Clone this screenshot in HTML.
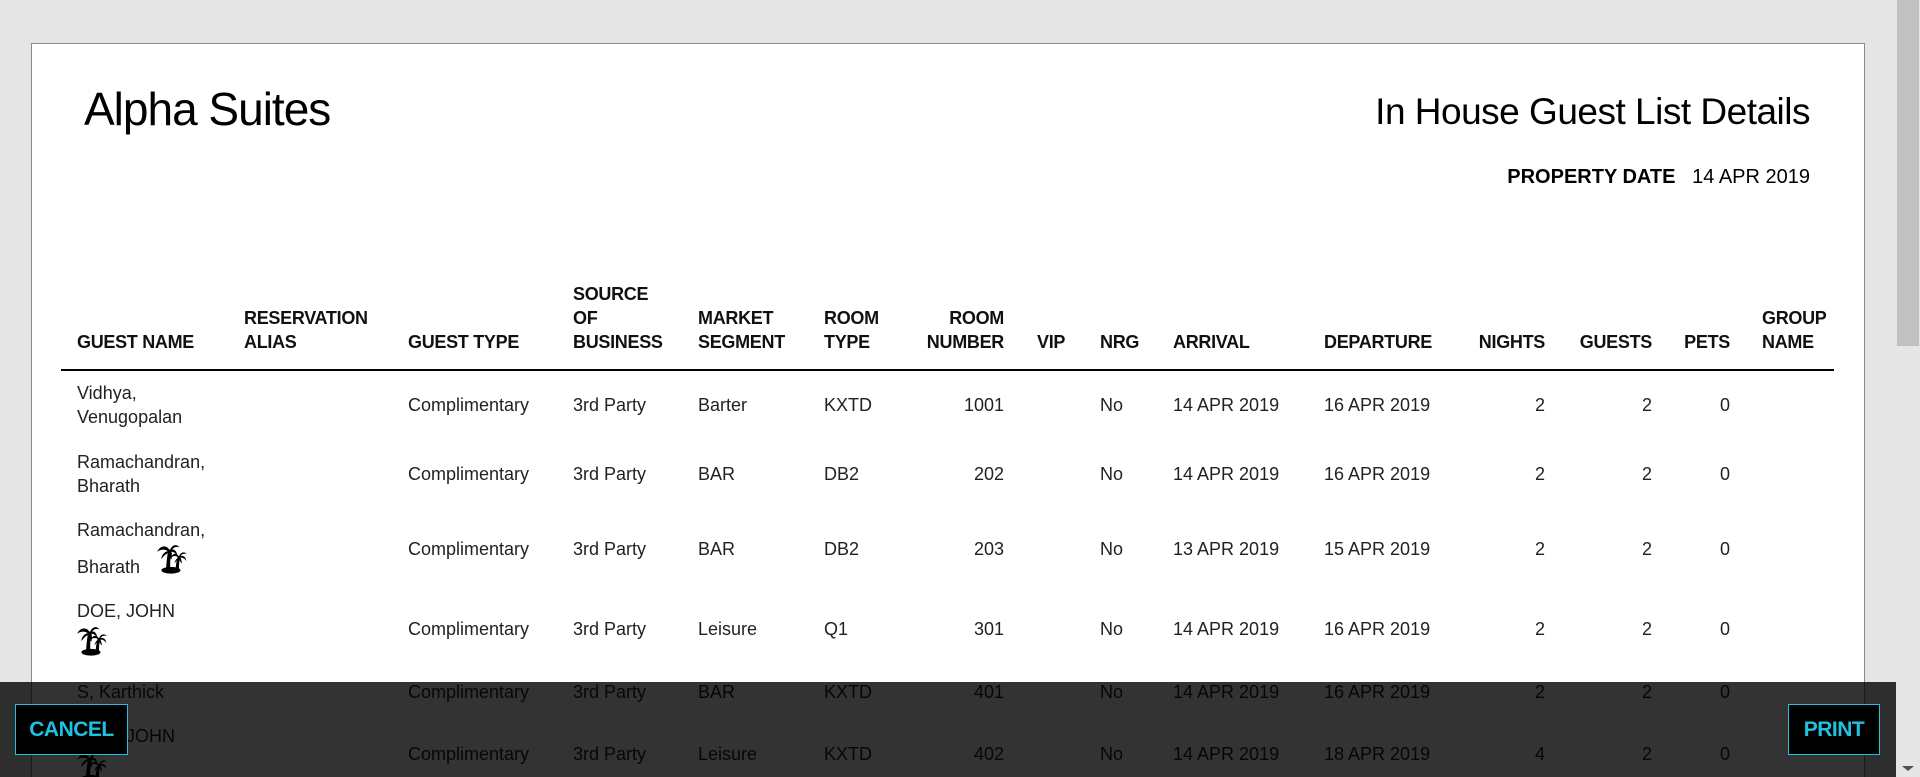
<!DOCTYPE html>
<html style="overflow:hidden;width:1920px;height:777px"><head><meta charset="utf-8"><style>
*{margin:0;padding:0;box-sizing:border-box}
body{width:1920px;height:777px;overflow:hidden;background:#e5e5e5;font-family:"Liberation Sans",sans-serif;color:#1a1a1a;position:relative}
.card{position:absolute;left:31px;top:43px;width:1834px;height:734px;background:#fff;border:1px solid #8a8a8a;border-bottom:none}
.a{position:absolute;white-space:nowrap}
.h{position:absolute;font-weight:bold;font-size:18px;line-height:24px;bottom:423px;letter-spacing:-0.3px;color:#111}
.d{position:absolute;font-size:18px;line-height:24px;white-space:nowrap;color:#222}
.r{text-align:right}
.sb{position:absolute;left:1896px;top:0;width:24px;height:777px;background:#e6e6e6}
.th{position:absolute;left:1897px;top:0;width:22px;height:346px;background:#c1c1c1}
.ov{position:absolute;left:0;top:682px;width:1896px;height:95px;background:rgba(0,0,0,0.8)}
.btn{position:absolute;top:704px;height:51px;background:#000;border:1px solid #1fc0e0;color:#1fc0e0;font-weight:bold;font-size:21px;line-height:49px;text-align:center;letter-spacing:-0.5px}
.pi{position:absolute;overflow:visible}
</style></head><body>
<div class="card"></div>
<div class="a" style="left:84px;top:82px;font-size:46px;letter-spacing:-1px;color:#000">Alpha Suites</div>
<div class="a" style="right:110px;top:91px;font-size:37px;letter-spacing:-0.5px;color:#000">In House Guest List Details</div>
<div class="a" style="right:110px;top:166px;font-size:20px;color:#000"><b>PROPERTY DATE</b>&nbsp;&nbsp; 14 APR 2019</div>

<div class="h" style="left:77px">GUEST NAME</div>
<div class="h" style="left:244px">RESERVATION<br>ALIAS</div>
<div class="h" style="left:408px">GUEST TYPE</div>
<div class="h" style="left:573px">SOURCE<br>OF<br>BUSINESS</div>
<div class="h" style="left:698px">MARKET<br>SEGMENT</div>
<div class="h" style="left:824px">ROOM<br>TYPE</div>
<div class="h r" style="right:916px">ROOM<br>NUMBER</div>
<div class="h" style="left:1037px">VIP</div>
<div class="h" style="left:1100px">NRG</div>
<div class="h" style="left:1173px">ARRIVAL</div>
<div class="h" style="left:1324px">DEPARTURE</div>
<div class="h r" style="right:375px">NIGHTS</div>
<div class="h r" style="right:268px">GUESTS</div>
<div class="h r" style="right:190px">PETS</div>
<div class="h" style="left:1762px">GROUP<br>NAME</div>
<div class="a" style="left:61px;top:369px;width:1773px;height:2px;background:#000"></div>

<svg width="0" height="0" style="position:absolute"><defs><symbol id="palm" viewBox="0 0 32 32"><ellipse cx="15" cy="28.5" rx="9" ry="3.2"/><path d="M10.5 28 C10.5 22 11.5 15 12.5 9 L15.5 9 C14.5 15 14 22 14.5 28Z"/><path d="M14 10 C11 4 5 5 2 11 C6 8.5 9 8.5 12 10.5 C8 11.5 6 15 6 18 C9 14 11 12.5 13.5 12 C13 15 14 17 15.5 18.5 C16 15 16 13 15.5 11 C18 11 20 13 21 15 C20.5 10 18 8.5 16 9 C18 6.5 20.5 6 23 7 C20 3 15.5 5 14 10Z"/><path d="M19.5 28 C19.5 23 20.5 19 21.5 15 L23.8 15 C23 19 22.5 23 22.5 28Z"/><path d="M22.5 15.5 C20 11.5 16.5 12.5 15 16.5 C17.5 14.5 20 14.8 22 16.5 C20 17.5 18.5 20 18.5 22 C20.5 19 21.5 18 22.7 17.5 C23 19.5 24 21 25.5 22 C25 20 24.5 18 24 16.5 C26.5 16.5 28.5 18 29.5 20 C29 15.5 26.5 14.5 24 15 C25.5 13 27.5 12.5 30 13 C27.5 10.5 24 11.5 22.5 15.5Z"/></symbol></defs></svg>

<!-- row1 -->
<div class="d" style="left:77px;top:381px">Vidhya,<br>Venugopalan</div>
<div class="d" style="left:408px;top:393px">Complimentary</div><div class="d" style="left:573px;top:393px">3rd Party</div><div class="d" style="left:698px;top:393px">Barter</div><div class="d" style="left:824px;top:393px">KXTD</div><div class="d r" style="right:916px;top:393px">1001</div><div class="d" style="left:1100px;top:393px">No</div><div class="d" style="left:1173px;top:393px">14 APR 2019</div><div class="d" style="left:1324px;top:393px">16 APR 2019</div><div class="d r" style="right:375px;top:393px">2</div><div class="d r" style="right:268px;top:393px">2</div><div class="d r" style="right:190px;top:393px">0</div>
<!-- row2 -->
<div class="d" style="left:77px;top:450px">Ramachandran,<br>Bharath</div>
<div class="d" style="left:408px;top:462px">Complimentary</div><div class="d" style="left:573px;top:462px">3rd Party</div><div class="d" style="left:698px;top:462px">BAR</div><div class="d" style="left:824px;top:462px">DB2</div><div class="d r" style="right:916px;top:462px">202</div><div class="d" style="left:1100px;top:462px">No</div><div class="d" style="left:1173px;top:462px">14 APR 2019</div><div class="d" style="left:1324px;top:462px">16 APR 2019</div><div class="d r" style="right:375px;top:462px">2</div><div class="d r" style="right:268px;top:462px">2</div><div class="d r" style="right:190px;top:462px">0</div>
<!-- row3 -->
<div class="d" style="left:77px;top:518px">Ramachandran,</div><div class="d" style="left:77px;top:555px">Bharath</div>
<svg class="pi" style="left:155px;top:540px" width="34" height="34"><use href="#palm"/></svg>
<div class="d" style="left:408px;top:537px">Complimentary</div><div class="d" style="left:573px;top:537px">3rd Party</div><div class="d" style="left:698px;top:537px">BAR</div><div class="d" style="left:824px;top:537px">DB2</div><div class="d r" style="right:916px;top:537px">203</div><div class="d" style="left:1100px;top:537px">No</div><div class="d" style="left:1173px;top:537px">13 APR 2019</div><div class="d" style="left:1324px;top:537px">15 APR 2019</div><div class="d r" style="right:375px;top:537px">2</div><div class="d r" style="right:268px;top:537px">2</div><div class="d r" style="right:190px;top:537px">0</div>
<!-- row4 -->
<div class="d" style="left:77px;top:599px">DOE, JOHN</div>
<svg class="pi" style="left:75px;top:622px" width="34" height="34"><use href="#palm"/></svg>
<div class="d" style="left:408px;top:617px">Complimentary</div><div class="d" style="left:573px;top:617px">3rd Party</div><div class="d" style="left:698px;top:617px">Leisure</div><div class="d" style="left:824px;top:617px">Q1</div><div class="d r" style="right:916px;top:617px">301</div><div class="d" style="left:1100px;top:617px">No</div><div class="d" style="left:1173px;top:617px">14 APR 2019</div><div class="d" style="left:1324px;top:617px">16 APR 2019</div><div class="d r" style="right:375px;top:617px">2</div><div class="d r" style="right:268px;top:617px">2</div><div class="d r" style="right:190px;top:617px">0</div>
<!-- row5 -->
<div class="d" style="left:77px;top:680px">S, Karthick</div>
<div class="d" style="left:408px;top:680px">Complimentary</div><div class="d" style="left:573px;top:680px">3rd Party</div><div class="d" style="left:698px;top:680px">BAR</div><div class="d" style="left:824px;top:680px">KXTD</div><div class="d r" style="right:916px;top:680px">401</div><div class="d" style="left:1100px;top:680px">No</div><div class="d" style="left:1173px;top:680px">14 APR 2019</div><div class="d" style="left:1324px;top:680px">16 APR 2019</div><div class="d r" style="right:375px;top:680px">2</div><div class="d r" style="right:268px;top:680px">2</div><div class="d r" style="right:190px;top:680px">0</div>
<!-- row6 -->
<div class="d" style="left:77px;top:724px">DOE, JOHN</div>
<svg class="pi" style="left:75px;top:748px" width="34" height="29"><use href="#palm" width="34" height="34"/></svg>
<div class="d" style="left:408px;top:742px">Complimentary</div><div class="d" style="left:573px;top:742px">3rd Party</div><div class="d" style="left:698px;top:742px">Leisure</div><div class="d" style="left:824px;top:742px">KXTD</div><div class="d r" style="right:916px;top:742px">402</div><div class="d" style="left:1100px;top:742px">No</div><div class="d" style="left:1173px;top:742px">14 APR 2019</div><div class="d" style="left:1324px;top:742px">18 APR 2019</div><div class="d r" style="right:375px;top:742px">4</div><div class="d r" style="right:268px;top:742px">2</div><div class="d r" style="right:190px;top:742px">0</div>

<div class="ov"></div>
<div class="btn" style="left:15px;width:113px">CANCEL</div>
<div class="btn" style="left:1788px;width:92px">PRINT</div>
<div class="sb"></div><div class="th"></div>
<div class="a" style="left:1902px;top:766px;width:0;height:0;border-left:6px solid transparent;border-right:6px solid transparent;border-top:5px solid #505050"></div>
</body></html>
